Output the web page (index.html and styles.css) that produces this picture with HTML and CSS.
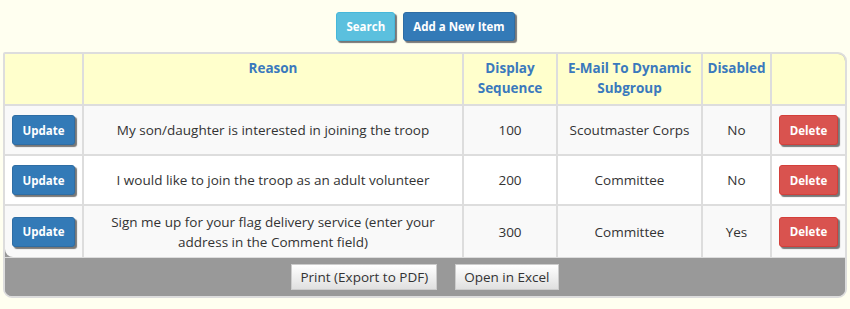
FILE: index.html
```html
<!DOCTYPE html>
<html>
<head>
<meta charset="utf-8">
<link rel="stylesheet" href="styles.css">
</head>
<body>
<div class="toolbar">
  <button class="btn btn-info">Search</button>
  <button class="btn btn-primary">Add a New Item</button>
</div>
<div class="grid-wrap">
  <table class="grid">
    <colgroup>
      <col class="c1"><col class="c2"><col class="c3"><col class="c4"><col class="c5"><col class="c6">
    </colgroup>
    <thead>
      <tr>
        <th></th>
        <th>Reason</th>
        <th>Display Sequence</th>
        <th>E-Mail To Dynamic Subgroup</th>
        <th>Disabled</th>
        <th></th>
      </tr>
    </thead>
    <tbody>
      <tr class="alt">
        <td><button class="btn btn-primary btn-sm">Update</button></td>
        <td>My son/daughter is interested in joining the troop</td>
        <td>100</td>
        <td>Scoutmaster Corps</td>
        <td>No</td>
        <td><button class="btn btn-danger btn-sm">Delete</button></td>
      </tr>
      <tr>
        <td><button class="btn btn-primary btn-sm">Update</button></td>
        <td>I would like to join the troop as an adult volunteer</td>
        <td>200</td>
        <td>Committee</td>
        <td>No</td>
        <td><button class="btn btn-danger btn-sm">Delete</button></td>
      </tr>
      <tr class="alt tall">
        <td><button class="btn btn-primary btn-sm">Update</button></td>
        <td>Sign me up for your flag delivery service (enter your address in the Comment field)</td>
        <td>300</td>
        <td>Committee</td>
        <td>Yes</td>
        <td><button class="btn btn-danger btn-sm">Delete</button></td>
      </tr>
    </tbody>
  </table>
  <div class="footer">
    <button class="plain">Print (Export to PDF)</button>
    <button class="plain">Open in Excel</button>
  </div>
</div>
</body>
</html>
```
FILE: styles.css
```css
html, body {
  margin: 0;
  background: #fffff0;
}
body {
  padding: 12px 3px 0 3px;
  font-family: "Open Sans", "Noto Sans", sans-serif;
  color: #333;
}
.toolbar {
  display: flex;
  justify-content: center;
  gap: 8px;
  padding-left: 1px;
}
.btn {
  font-family: "Open Sans", sans-serif;
  font-weight: bold;
  font-size: 11.5px;
  color: #fff;
  border: 1px solid transparent;
  border-radius: 3px;
  box-shadow: 2px 2px 1px #777;
  height: 29px;
  padding: 0 9px;
  cursor: pointer;
}
.btn-info { background: #5bc0de; border-color: #46b8da; }
.btn-primary { background: #337ab7; border-color: #2e6da4; }
.btn-danger { background: #d9534f; border-color: #d43f3a; }
.btn-sm {
  height: 30px;
  padding: 0 10px;
}
.grid-wrap {
  margin-top: 11px;
  border: 2px solid #dddddd;
  border-radius: 2px 9px 9px 9px;
  overflow: hidden;
  background: #999;
}
.grid {
  width: 100%;
  border-collapse: collapse;
  border-style: hidden;
  table-layout: fixed;
  font-size: 13.5px;
}
.c1 { width: 78px; }
.c2 { width: 380px; }
.c3 { width: 94px; }
.c4 { width: 145px; }
.c5 { width: 69px; }
.grid th {
  background: #ffffcc;
  color: #3a79bd;
  font-weight: bold;
  font-size: 13.5px;
  vertical-align: top;
  padding: 4px 4px 0 4px;
  height: 46px;
  line-height: 20px;
  border: 2px solid #dddddd;
}
.grid td {
  background: #ffffff;
  border: 2px solid #dddddd;
  text-align: center;
  vertical-align: middle;
  height: 48px;
  padding: 0 6px;
  line-height: 20px;
}
.grid tr.tall td { height: 51px; }
.grid tr.alt td { background: #f9f9f9; }
.grid tbody tr:last-child td { border-bottom: 2px solid #dddddd; }
.grid tbody tr:last-child td:first-child { border-bottom-left-radius: 8px; }
.footer {
  display: flex;
  justify-content: center;
  gap: 18px;
  padding: 6px 0 6px 0;
  background: #999999;
  border-top: 1px solid #dddddd;
}
.plain {
  font-family: "Open Sans", sans-serif;
  font-size: 13.5px;
  color: #333;
  background: linear-gradient(#ffffff, #e0e0e0);
  border: 1px solid #cccccc;
  border-radius: 0;
  height: 26px;
  padding: 0 8px;
}
```
